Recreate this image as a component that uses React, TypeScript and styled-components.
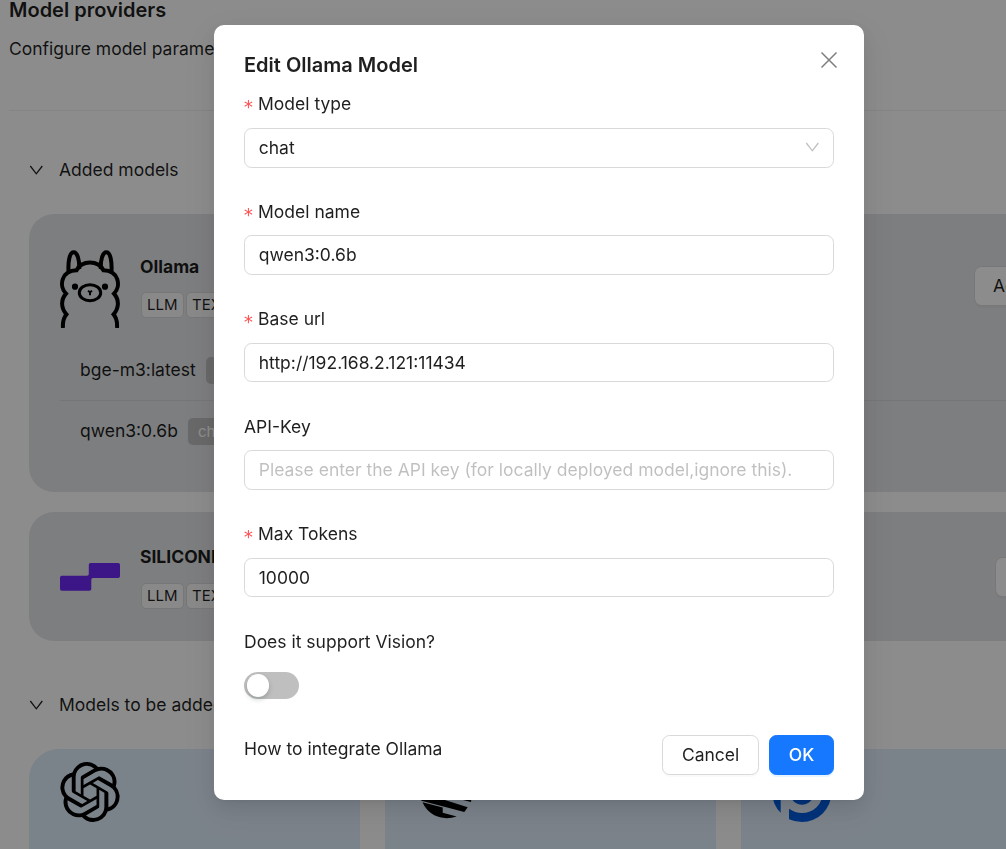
// src/pages/ModelProviders.tsx

import React, { useState } from 'react';
import styled, { createGlobalStyle } from 'styled-components';
import { SiOpenai } from 'react-icons/si';

const GlobalStyle = createGlobalStyle`
  * {
    box-sizing: border-box;
  }

  body {
    margin: 0;
    background: #fff;
    font-family: Inter, 'Liberation Sans', sans-serif;
    font-size: 17.5px;
    line-height: 27.5px;
    color: rgba(0, 0, 0, 0.88);
  }
`;

const Page = styled.div`
  height: 849px;
  overflow: hidden;
  padding-left: 9px;
`;

const Content = styled.main`
  display: flow-root;
  width: 1088px;
`;

const PageHeader = styled.header`
  display: flow-root;
  height: 111px;
  border-bottom: 1px solid rgba(5, 5, 5, 0.06);
`;

const PageTitle = styled.div`
  font-size: 20px;
  font-weight: 600;
  line-height: 30px;
  margin-top: -5px;
  padding-bottom: 10px;
`;

const SectionHeader = styled.div<{ $top: number }>`
  display: flex;
  align-items: center;
  gap: 16px;
  height: 28px;
  margin-top: ${(p) => p.$top}px;
  padding-left: 20px;
`;

const CardList = styled.div`
  display: flex;
  flex-direction: column;
  gap: 20px;
  padding: 30px 0 0 20px;
`;

const ProviderCard = styled.section<{ $height: number; $top: number }>`
  height: ${(p) => p.$height}px;
  padding: ${(p) => p.$top}px 30px 0 31px;
  border-radius: 25px;
  background: #e4e5e8;
`;

const ProviderRow = styled.div`
  display: flex;
  align-items: center;
  justify-content: space-between;
  height: 78px;
`;

const ProviderInfo = styled.div`
  display: flex;
  align-items: center;
  gap: 20px;
`;

const ProviderText = styled.div<{ $lift: number }>`
  margin-bottom: ${(p) => p.$lift}px;
`;

const ProviderName = styled.div`
  font-weight: 700;
  margin-bottom: 12px;
`;

const Tags = styled.div`
  display: flex;
  gap: 2.5px;
  padding-left: 1px;
`;

const Tag = styled.span`
  height: 26px;
  padding: 0 5px;
  border: 1px solid #d9d9d9;
  border-radius: 5px;
  background: #fafafa;
  font-size: 15px;
  line-height: 24px;
`;

const ModelList = styled.div`
  padding-top: 12px;
`;

const ModelRow = styled.div`
  display: flex;
  align-items: center;
  gap: 10px;
  height: 60px;
  padding-left: 20px;

  & + & {
    height: 61px;
    border-top: 1px solid rgba(5, 5, 5, 0.06);
  }
`;

const TypeTag = styled.span`
  height: 27px;
  padding: 0 10px;
  border-radius: 5px;
  background: #bfbfbf;
  color: #fff;
  font-size: 15px;
  line-height: 27px;
`;

const Button = styled.button<{ $primary?: boolean }>`
  height: 40px;
  padding: 0 18.75px 2px;
  border: 1px solid ${(p) => (p.$primary ? '#1677ff' : '#d9d9d9')};
  border-radius: 7.5px;
  background: ${(p) => (p.$primary ? '#1677ff' : '#fff')};
  color: ${(p) => (p.$primary ? '#fff' : 'rgba(0, 0, 0, 0.88)')};
  box-shadow: 0 2px 0 ${(p) => (p.$primary ? 'rgba(5, 145, 255, 0.1)' : 'rgba(0, 0, 0, 0.02)')};
  font-family: inherit;
  font-size: 17.5px;
  font-weight: ${(p) => (p.$primary ? 500 : 400)};
  white-space: nowrap;
  cursor: pointer;
`;

const ActionButton = styled(Button)<{ $width: number; $lift: number }>`
  width: ${(p) => p.$width}px;
  margin-bottom: ${(p) => p.$lift}px;
  padding-left: 18px;
  overflow: hidden;
  text-align: left;
`;

const AddGrid = styled.div`
  display: grid;
  grid-template-columns: repeat(3, 331px);
  gap: 25px;
  padding: 30px 0 0 20px;
`;

const AddCard = styled.div`
  height: 200px;
  padding: 13px 31px 0;
  border-radius: 30px;
  background: #e1eefc;
  color: #000;

  svg {
    display: block;
  }
`;

const Mask = styled.div`
  position: fixed;
  inset: 0;
  display: flex;
  justify-content: center;
  align-items: flex-start;
  padding: 25px 0 0 72px;
  background: rgba(0, 0, 0, 0.45);
`;

const Modal = styled.div`
  position: relative;
  width: 650px;
  height: 775px;
  padding: 25px 30px;
  border-radius: 10px;
  background: #fff;
  box-shadow:
    0 7.5px 20px 0 rgba(0, 0, 0, 0.08),
    0 3.75px 7.5px -5px rgba(0, 0, 0, 0.12),
    0 11.25px 35px 10px rgba(0, 0, 0, 0.05);
`;

const ModalTitle = styled.div`
  margin-bottom: 10px;
  font-size: 20px;
  font-weight: 600;
  line-height: 30px;
`;

const CloseButton = styled.button`
  position: absolute;
  top: 15px;
  right: 15px;
  display: flex;
  align-items: center;
  justify-content: center;
  width: 40px;
  height: 40px;
  padding: 0;
  border: none;
  background: transparent;
  color: rgba(0, 0, 0, 0.5);
  cursor: pointer;
`;

const FormItem = styled.div`
  height: 77.5px;
  margin-bottom: 30px;
`;

const Label = styled.label`
  display: flex;
  align-items: center;
  height: 27.5px;
  margin-bottom: 10px;
`;

const Required = styled.span`
  width: 9.75px;
  margin: 0 5.25px 0 -1px;
  padding-top: 6px;
  color: #ff4d4f;
  font-family: 'DejaVu Sans Mono', monospace;
  font-size: 18px;
  line-height: 17.5px;
`;

const Input = styled.input`
  display: block;
  width: 100%;
  height: 39.5px;
  padding: 0 13.75px;
  border: 1px solid #d9d9d9;
  border-radius: 7.5px;
  outline: none;
  color: rgba(0, 0, 0, 0.88);
  font-family: inherit;
  font-size: 17.5px;

  &::placeholder {
    color: rgba(0, 0, 0, 0.25);
  }
`;

const Select = styled.div`
  display: flex;
  align-items: center;
  justify-content: space-between;
  height: 40px;
  padding: 0 13.75px;
  border: 1px solid #d9d9d9;
  border-radius: 7.5px;
  color: rgba(0, 0, 0, 0.88);

  svg {
    margin-bottom: 1.5px;
    color: rgba(0, 0, 0, 0.25);
  }
`;

const SwitchLine = styled.div`
  display: flex;
  align-items: center;
  height: 41px;
`;

const Switch = styled.button<{ $on: boolean }>`
  display: flex;
  align-items: center;
  justify-content: ${(p) => (p.$on ? 'flex-end' : 'flex-start')};
  width: 55px;
  height: 27px;
  padding: 0 2.5px;
  border: none;
  border-radius: 14px;
  background: ${(p) => (p.$on ? '#1677ff' : 'rgba(0, 0, 0, 0.25)')};
  cursor: pointer;
`;

const Knob = styled.span`
  width: 22.5px;
  height: 22.5px;
  border-radius: 50%;
  background: #fff;
  box-shadow: 0 2.5px 5px 0 rgba(0, 35, 11, 0.2);
`;

const Footer = styled.div`
  display: flex;
  justify-content: space-between;
  align-items: flex-start;
`;

const FooterButtons = styled.div`
  display: flex;
  gap: 10px;
`;

const Chevron: React.FC = () => (
  <svg width="14" height="14" viewBox="0 0 14 14" fill="none" stroke="currentColor" strokeWidth="1.3">
    <path d="M1.3 3L7.3 10.8L13.3 3" />
  </svg>
);

const OllamaIcon: React.FC = () => (
  <svg width="60" height="78" viewBox="0 0 60 78" fill="none" stroke="#000" strokeWidth="4">
    <path d="M8.5 21C8 12 9.5 2.2 13.6 2.2C17.5 2.2 19.5 10 19.2 19" />
    <path d="M51.5 21C52 12 50.5 2.2 46.4 2.2C42.5 2.2 40.5 10 40.8 19" />
    <path d="M3 78C2.5 71 4 67 6.4 64.3C1 58 0.5 50 6 43.6C-1.5 36 1.5 20.5 16.5 20.3C22 9.8 38 9.8 43.5 20.3C58.5 20.5 61.5 36 54 43.6C59.5 50 59 58 53.6 64.3C56 67 57.5 71 57 78" />
    <ellipse cx="30" cy="42.7" rx="10.7" ry="8" strokeWidth="3" />
    <path d="M28 40.8L30 42.2L32 40.8M30 42V45.3" strokeWidth="2" />
    <circle cx="15" cy="36.7" r="3.1" fill="#000" stroke="none" />
    <circle cx="45" cy="36.7" r="3.1" fill="#000" stroke="none" />
  </svg>
);

const SiliconFlowIcon: React.FC = () => (
  <svg width="60" height="60" viewBox="0 0 60 60" fill="#6e29f6">
    <path d="M30.5 16H58.2Q60 16 60 17.8V29.2Q60 31 58.2 31H33Q31.3 31 31.3 32.7V42Q31.3 43.8 29.5 43.8H1.8Q0 43.8 0 42V30.6Q0 28.8 1.8 28.8H27Q28.8 28.8 28.8 27V17.8Q28.8 16 30.5 16Z" />
  </svg>
);

const MoonshotIcon: React.FC = () => (
  <svg width="60" height="60" viewBox="0 0 60 60" fill="#000">
    <path d="M8 15Q15 4 29 4L48 12L53 20L8 15Z" />
    <path d="M3 24L55.3 37.5L55 40L3 27Z" />
    <path d="M3.5 32L27.3 37.6L51.7 45.3L48.3 50L5.5 38.7Z" />
    <path d="M6.5 40.2L26.7 45.5V50.7L40.7 54.5Q35 56.4 29 56.1Q13 54.5 6.5 40.2Z" />
  </svg>
);

const BluePadIcon: React.FC = () => (
  <svg width="60" height="60" viewBox="0 0 60 60" fill="#005de3">
    <path d="M8.7 10.5V50.7Q0.5 43 0.5 31Q0.5 19 8.7 10.5Z" />
    <path d="M17 5Q23 2 30 2A29.3 29 0 0 1 30 60Q23 60 17 57.3V46.8Q23 51 30 51A20.6 20 0 0 0 30 11Q23 11 17 15Z" />
    <circle cx="30" cy="31" r="11.8" />
  </svg>
);

interface FieldProps {
  label: string;
  required?: boolean;
  children: React.ReactNode;
}

const Field: React.FC<FieldProps> = ({ label, required, children }) => (
  <FormItem>
    <Label>
      {required && <Required>*</Required>}
      {label}
    </Label>
    {children}
  </FormItem>
);

const ModelProviders: React.FC = () => {
  const [modelName, setModelName] = useState('qwen3:0.6b');
  const [baseUrl, setBaseUrl] = useState('http://192.168.2.121:11434');
  const [apiKey, setApiKey] = useState('');
  const [maxTokens, setMaxTokens] = useState('10000');
  const [vision, setVision] = useState(false);

  return (
    <>
      <GlobalStyle />
      <Page>
        <Content>
          <PageHeader>
            <PageTitle>Model providers</PageTitle>
            Configure model parameters
          </PageHeader>

          <SectionHeader $top={45}>
            <Chevron />
            Added models
          </SectionHeader>
          <CardList>
            <ProviderCard $height={278} $top={36}>
              <ProviderRow>
                <ProviderInfo>
                  <OllamaIcon />
                  <ProviderText $lift={7}>
                    <ProviderName>Ollama</ProviderName>
                    <Tags>
                      <Tag>LLM</Tag>
                      <Tag>TEXT</Tag>
                    </Tags>
                  </ProviderText>
                </ProviderInfo>
                <ActionButton $width={93} $lift={6}>Add</ActionButton>
              </ProviderRow>
              <ModelList>
                <ModelRow>
                  bge-m3:latest
                  <TypeTag>embedding</TypeTag>
                </ModelRow>
                <ModelRow>
                  qwen3:0.6b
                  <TypeTag>chat</TypeTag>
                </ModelRow>
              </ModelList>
            </ProviderCard>
            <ProviderCard $height={129} $top={26}>
              <ProviderRow>
                <ProviderInfo>
                  <SiliconFlowIcon />
                  <ProviderText $lift={2}>
                    <ProviderName>SILICONFLOW</ProviderName>
                    <Tags>
                      <Tag>LLM</Tag>
                      <Tag>TEXT</Tag>
                    </Tags>
                  </ProviderText>
                </ProviderInfo>
                <ActionButton $width={72} $lift={0}>Key</ActionButton>
              </ProviderRow>
            </ProviderCard>
          </CardList>

          <SectionHeader $top={50}>
            <Chevron />
            Models to be added
          </SectionHeader>
          <AddGrid>
            <AddCard>
              <SiOpenai size={60} />
            </AddCard>
            <AddCard>
              <MoonshotIcon />
            </AddCard>
            <AddCard>
              <BluePadIcon />
            </AddCard>
          </AddGrid>
        </Content>
      </Page>

      <Mask>
        <Modal>
          <CloseButton aria-label="Close">
            <svg width="18" height="18" viewBox="0 0 18 18" stroke="currentColor" strokeWidth="1.5">
              <path d="M1.5 1.5L16.5 16.5M16.5 1.5L1.5 16.5" />
            </svg>
          </CloseButton>
          <ModalTitle>Edit Ollama Model</ModalTitle>
          <Field label="Model type" required>
            <Select>
              chat
              <Chevron />
            </Select>
          </Field>
          <Field label="Model name" required>
            <Input value={modelName} onChange={(e) => setModelName(e.target.value)} />
          </Field>
          <Field label="Base url" required>
            <Input value={baseUrl} onChange={(e) => setBaseUrl(e.target.value)} />
          </Field>
          <Field label="API-Key">
            <Input
              value={apiKey}
              onChange={(e) => setApiKey(e.target.value)}
              placeholder="Please enter the API key (for locally deployed model,ignore this)."
            />
          </Field>
          <Field label="Max Tokens" required>
            <Input value={maxTokens} onChange={(e) => setMaxTokens(e.target.value)} />
          </Field>
          <Field label="Does it support Vision?">
            <SwitchLine>
              <Switch $on={vision} onClick={() => setVision(!vision)}>
                <Knob />
              </Switch>
            </SwitchLine>
          </Field>
          <Footer>
            <span>How to integrate Ollama</span>
            <FooterButtons>
              <Button>Cancel</Button>
              <Button $primary>OK</Button>
            </FooterButtons>
          </Footer>
        </Modal>
      </Mask>
    </>
  );
};

export default ModelProviders;
